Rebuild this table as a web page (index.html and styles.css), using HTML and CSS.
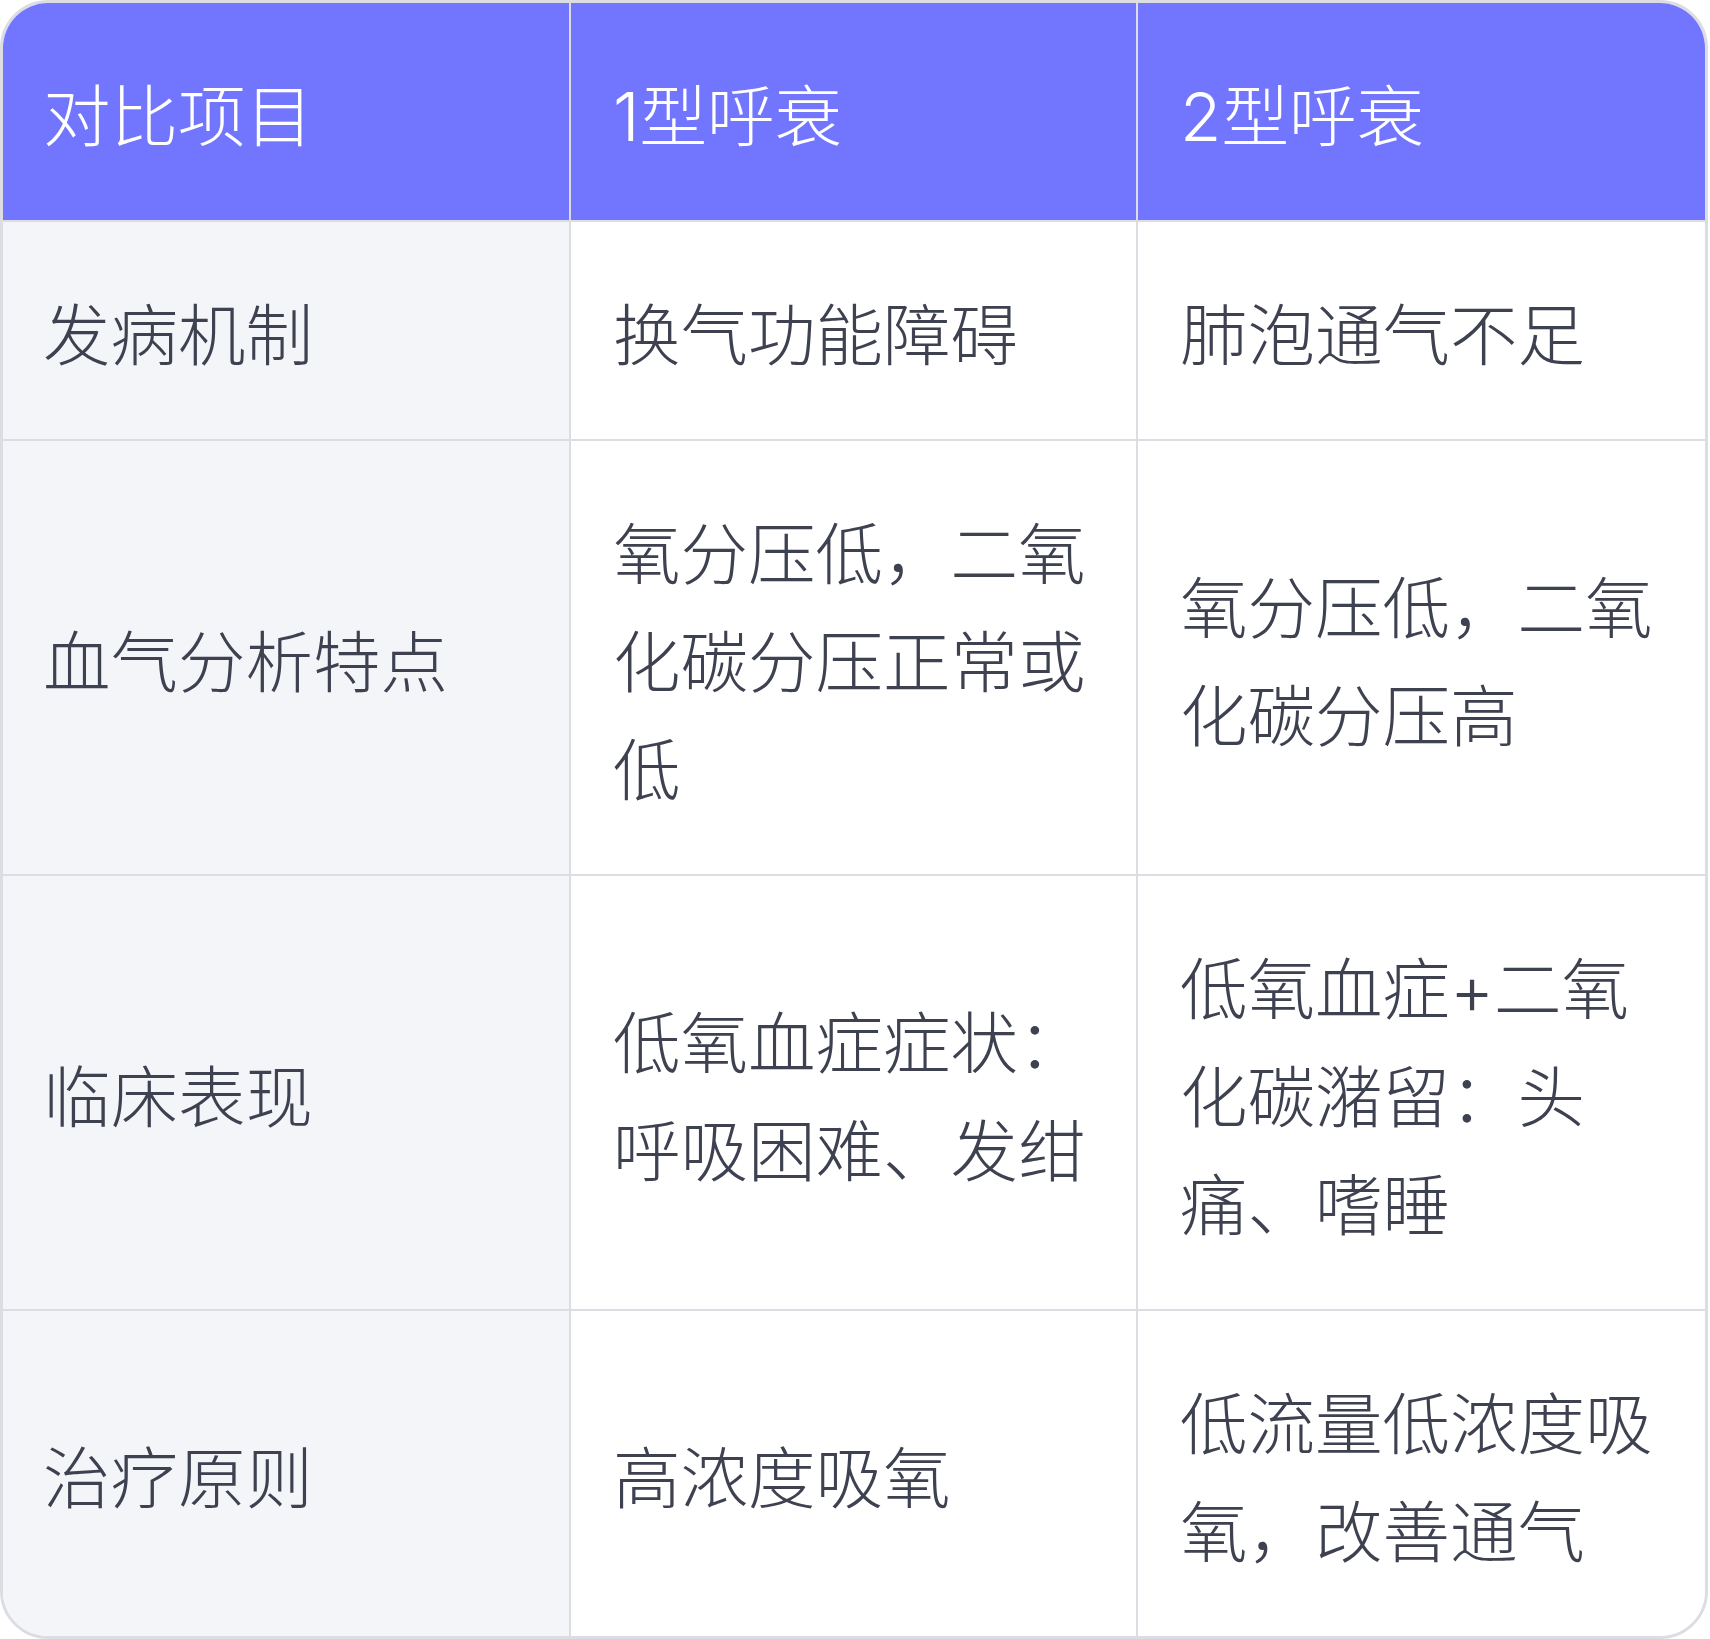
FILE: index.html
```html
<!DOCTYPE html>
<html lang="zh-CN">
<head>
<meta charset="utf-8">
<title>1型与2型呼吸衰竭对比</title>
<link rel="stylesheet" href="styles.css">
</head>
<body>
<div class="table-wrap">
  <table class="compare">
    <colgroup>
      <col class="c1">
      <col class="c2">
      <col class="c3">
    </colgroup>
    <thead>
      <tr>
        <th>对比项目</th>
        <th>1型呼衰</th>
        <th>2型呼衰</th>
      </tr>
    </thead>
    <tbody>
      <tr>
        <td class="label">发病机制</td>
        <td>换气功能障碍</td>
        <td>肺泡通气不足</td>
      </tr>
      <tr>
        <td class="label">血气分析特点</td>
        <td>氧分压低，二氧化碳分压正常或低</td>
        <td>氧分压低，二氧化碳分压高</td>
      </tr>
      <tr>
        <td class="label">临床表现</td>
        <td>低氧血症症状：呼吸困难、发绀</td>
        <td>低氧血症+二氧化碳潴留：头痛、嗜睡</td>
      </tr>
      <tr>
        <td class="label">治疗原则</td>
        <td>高浓度吸氧</td>
        <td>低流量低浓度吸氧，改善通气</td>
      </tr>
    </tbody>
  </table>
</div>
</body>
</html>
```

FILE: styles.css
```css
html, body {
  margin: 0;
  padding: 0;
  background: #ffffff;
}

.table-wrap {
  width: 1708px;
  box-sizing: border-box;
  border: 3px solid #dcdde2;
  border-radius: 48px;
  overflow: hidden;
}

.compare {
  width: 100%;
  border-collapse: separate;
  border-spacing: 0;
  table-layout: fixed;
  font-family: Inter, "Noto Sans CJK SC", sans-serif;
  font-size: 67.5px;
  font-weight: 300;
  line-height: 108px;
  color: #3d4150;
}

.compare .c1 { width: 568px; }
.compare .c2 { width: 567px; }
.compare .c3 { width: 567px; }

.compare th,
.compare td {
  padding: 60px 40px 49px 42px;
  text-align: left;
  vertical-align: middle;
  border-right: 2px solid #dcdde2;
  border-bottom: 2px solid #dcdde2;
  font-weight: 300;
}

.compare th:first-child,
.compare td:first-child {
  padding-left: 40px;
}

.compare th:last-child,
.compare td:last-child {
  border-right: none;
  padding-left: 42px;
}

.compare tbody tr:last-child td {
  border-bottom: none;
}

.compare th {
  background: #7276ff;
  color: #ffffff;
}

.compare td {
  background: #ffffff;
}

.compare td.label {
  background: #f4f5f9;
}
```
